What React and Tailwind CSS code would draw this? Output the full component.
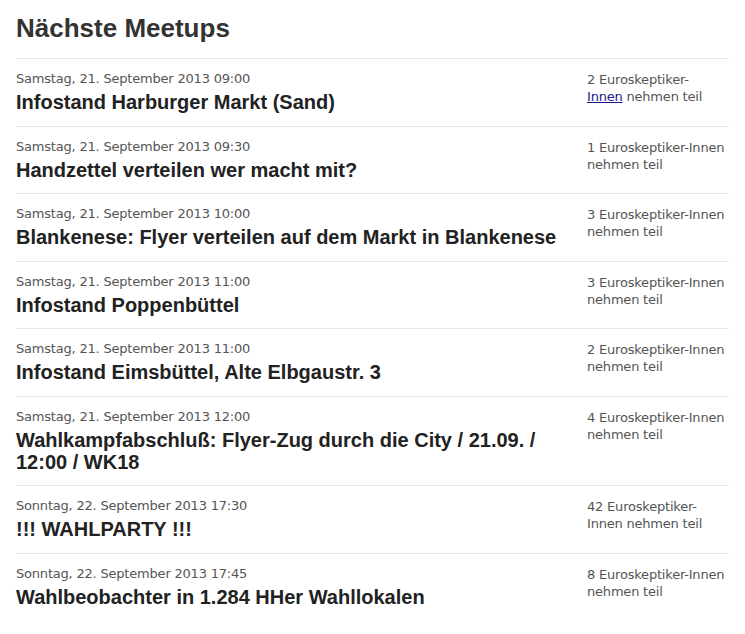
const meetups = [
  { date: "Samstag, 21. September 2013 09:00", title: "Infostand Harburger Markt (Sand)", count: 2, link: true },
  { date: "Samstag, 21. September 2013 09:30", title: "Handzettel verteilen wer macht mit?", count: 1 },
  { date: "Samstag, 21. September 2013 10:00", title: "Blankenese: Flyer verteilen auf dem Markt in Blankenese", count: 3 },
  { date: "Samstag, 21. September 2013 11:00", title: "Infostand Poppenbüttel", count: 3 },
  { date: "Samstag, 21. September 2013 11:00", title: "Infostand Eimsbüttel, Alte Elbgaustr. 3", count: 2 },
  { date: "Samstag, 21. September 2013 12:00", title: "Wahlkampfabschluß: Flyer-Zug durch die City / 21.09. / 12:00 / WK18", count: 4 },
  { date: "Sonntag, 22. September 2013 17:30", title: "!!! WAHLPARTY !!!", count: 42 },
  { date: "Sonntag, 22. September 2013 17:45", title: "Wahlbeobachter in 1.284 HHer Wahllokalen", count: 8 },
];

export default function App() {
  return (
    <div className="min-h-screen bg-white px-4 font-['Liberation_Sans',Arial,sans-serif]">
      <h1 className="pt-[13px] mb-[15px] text-[26px] leading-[30px] font-bold text-[#333]">
        Nächste Meetups
      </h1>

      <div>
        {meetups.map((m, i) => (
          <MeetupRow key={i} {...m} />
        ))}
      </div>
    </div>
  );
}

function MeetupRow({ date, title, count, link }) {
  return (
    <div className="grid grid-cols-[1fr_142px] gap-x-3 border-t border-[#e8e8e8] pt-3 pb-[12.5px]">
      <div>
        <div className="font-['DejaVu_Sans',Verdana,sans-serif] text-[13px] leading-4 tracking-[-0.2px] text-[#555]">
          {date}
        </div>
        <h2 className="mt-1 text-[20px] leading-[22px] font-bold text-[#222]">
          {title}
        </h2>
      </div>
      <div className="font-['DejaVu_Sans',Verdana,sans-serif] text-[13px] leading-[17px] tracking-[-0.2px] text-[#555]">
        {link ? (
          <>
            {count} Euroskeptiker-
            <br />
            <a href="#" className="text-[#1a1a8a] underline">Innen</a> nehmen teil
          </>
        ) : count >= 10 ? (
          <>
            {count} Euroskeptiker-
            <br />
            Innen nehmen teil
          </>
        ) : (
          <>
            <span className="whitespace-nowrap">{count} Euroskeptiker-Innen</span>
            <br />
            nehmen teil
          </>
        )}
      </div>
    </div>
  );
}
